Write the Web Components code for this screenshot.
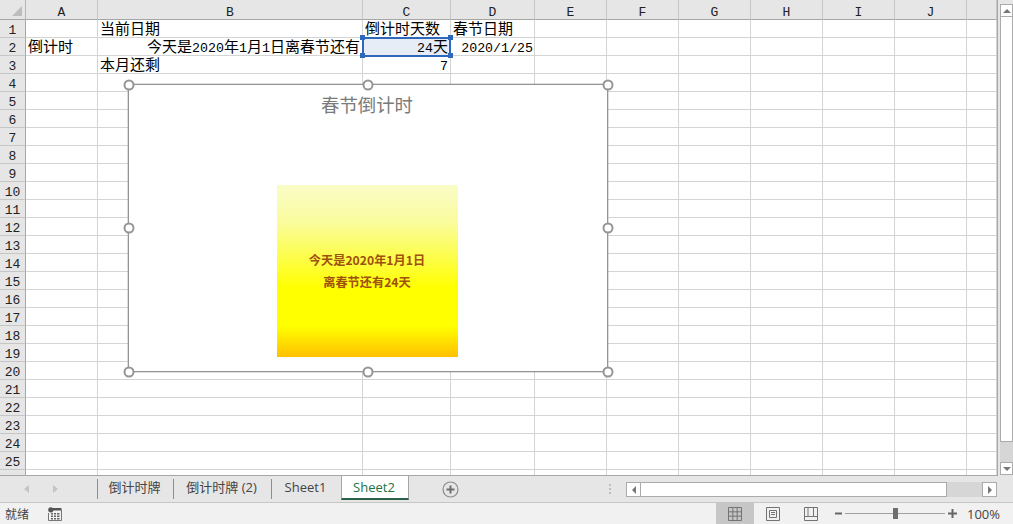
<!DOCTYPE html>
<html>
<head>
<meta charset="utf-8">
<style>
  html, body { margin: 0; padding: 0; background: #e6e6e6; overflow: hidden; }
</style>
</head>
<body>
<excel-app></excel-app>
<script>
const SONG = '"Liberation Mono", "Noto Sans CJK SC", monospace';
const UI = '"Noto Sans CJK SC", sans-serif';
const UI_LATIN = '"Open Sans", "Noto Sans CJK SC", sans-serif';

// latin runs are smaller than the cjk ones, SimSun style
const lat = s => `<span class="n">${s}</span>`;

class ExcelApp extends HTMLElement {
  constructor() {
    super();
    this.shadow = this.attachShadow({ mode: 'open' });
  }
  connectedCallback() {
    this.shadow.innerHTML = /*html*/`
    <style>
      :host { display: flex; flex-direction: column; width: 1013px; height: 524px; overflow: hidden; }
      .top { display: flex; height: 476px; }
    </style>
    <div class="top">
      <sheet-grid></sheet-grid>
      <v-scroll></v-scroll>
    </div>
    <sheet-tabs></sheet-tabs>
    <status-bar></status-bar>`;
  }
}

class SheetGrid extends HTMLElement {
  constructor() {
    super();
    this.shadow = this.attachShadow({ mode: 'open' });
  }
  connectedCallback() {
    const cols = ['A', 'B', 'C', 'D', 'E', 'F', 'G', 'H', 'I', 'J', ''];
    const cells = {
      'A2': `倒计时`,
      'B1': `当前日期`,
      'B2': `今天是${lat('2020')}年${lat('1')}月${lat('1')}日离春节还有`,
      'B3': `本月还剩`,
      'C1': `倒计时天数`,
      'C2': `${lat('24')}天`,
      'C3': lat('7'),
      'D1': `春节日期`,
      'D2': lat('2020/1/25')
    };
    const right = ['B2', 'C2', 'C3', 'D2'];
    let html = `<div class="corner"><i></i></div>`;
    cols.forEach(c => html += `<div class="col-head">${c}</div>`);
    for (let r = 1; r <= 26; r++) {
      html += `<div class="row-head">${r <= 25 ? r : ''}</div>`;
      cols.forEach(c => {
        const key = c + r;
        let cls = right.includes(key) ? 'cell right' : 'cell';
        if (key === 'C2') cls += ' active';
        if (key === 'D2') cls += ' date';
        html += `<div class="${cls}">${cells[key] || ''}</div>`;
      });
    }
    this.shadow.innerHTML = /*html*/`
    <style>
      :host { display: block; position: relative; width: 998px; height: 476px; background: #fff; overflow: hidden;
        box-sizing: border-box; border-right: 1px solid #a6a6a6; border-bottom: 1px solid #a6a6a6;
        font: 15px/17px ${SONG}; color: #000; }
      .grid { display: grid; grid-template-columns: 26px 72px 265px 88px 84px repeat(6, 72px) 30px;
        grid-template-rows: 20px repeat(26, 18px); }
      .corner, .col-head, .row-head { box-sizing: border-box; background: #e6e6e6; font-size: 13px; color: #222;
        display: flex; align-items: center; justify-content: center; }
      .corner { position: relative; border-right: 1px solid #b5b5b5; border-bottom: 1px solid #a6a6a6; }
      .corner i { position: absolute; right: 3px; bottom: 3px; width: 0; height: 0;
        border-left: 10px solid transparent; border-bottom: 10px solid #bdbdbd; }
      .col-head { border-right: 1px solid #c6c6c6; border-bottom: 1px solid #a6a6a6; padding-top: 6px; }
      .row-head { border-right: 1px solid #a6a6a6; border-bottom: 1px solid #c6c6c6; padding-top: 3px; }
      .cell { box-sizing: border-box; border-right: 1px solid #d4d4d4; border-bottom: 1px solid #d4d4d4;
        padding: 2px 2px 0 2px; white-space: nowrap; overflow: visible; min-width: 0; }
      .right { text-align: right; }
      .cell.date { padding-right: 1px; }
      .cell.active { background: #e6edf6; }
      .n { font-size: 13.3px; }
      .sel { position: absolute; left: 362px; top: 37px; width: 89px; height: 20px; box-sizing: border-box;
        border: 2px solid #2f67bd; }
      .sel b { position: absolute; width: 5px; height: 5px; background: #2f67bd; }
      .sel b:nth-child(1) { left: -4px; top: -4px; }
      .sel b:nth-child(2) { right: -4px; top: -4px; }
      .sel b:nth-child(3) { left: -4px; bottom: -3px; }
      .sel b:nth-child(4) { right: -4px; bottom: -3px; }
      countdown-chart { position: absolute; left: 128px; top: 84px; }
    </style>
    <div class="grid">${html}</div>
    <div class="sel"><b></b><b></b><b></b><b></b></div>
    <countdown-chart></countdown-chart>`;
  }
}

class CountdownChart extends HTMLElement {
  constructor() {
    super();
    this.shadow = this.attachShadow({ mode: 'open' });
  }
  connectedCallback() {
    const handles = [[0, 0], [50, 0], [100, 0], [0, 50], [100, 50], [0, 100], [50, 100], [100, 100]];
    this.shadow.innerHTML = /*html*/`
    <style>
      :host { display: block; width: 480px; height: 288px; box-sizing: border-box; position: relative;
        background: #fff; border: 1px solid #959595; box-shadow: 0 0 0 1px rgba(160, 160, 160, .35); font-family: ${UI}; }
      .inner { display: flex; flex-direction: column; align-items: center; height: 100%; padding-right: 2px; box-sizing: border-box; }
      h2 { margin: 6px 0 0; font-size: 18.4px; line-height: 26px; font-weight: 400; color: #7a7a7a; }
      .card { margin-top: 68px; width: 181px; height: 172px; display: flex; flex-direction: column;
        align-items: center; justify-content: center; gap: 4px; box-sizing: border-box;
        background: linear-gradient(#fafcc8 0%, #fafc9c 22%, #ffff00 60%, #ffff00 82%, #ffc000 100%);
        color: #a0500f; font-weight: 700; font-size: 12.2px; line-height: 18px; }
      .handles { position: absolute; left: -.5px; top: -.5px; width: 479px; height: 287px; }
      .h { position: absolute; width: 11px; height: 11px; box-sizing: border-box; border-radius: 50%;
        background: #fff; border: 2px solid #959595; transform: translate(-50%, -50%); }
    </style>
    <div class="inner">
      <h2>春节倒计时</h2>
      <div class="card">
        <div>今天是2020年1月1日</div>
        <div>离春节还有24天</div>
      </div>
    </div>
    <div class="handles">
      ${handles.map(h => `<span class="h" style="left:${h[0]}%;top:${h[1]}%"></span>`).join('')}
    </div>`;
  }
}

class VScroll extends HTMLElement {
  constructor() {
    super();
    this.shadow = this.attachShadow({ mode: 'open' });
  }
  connectedCallback() {
    this.shadow.innerHTML = /*html*/`
    <style>
      :host { display: flex; flex-direction: column; width: 13px; margin-left: 2px; background: #e6e6e6; height: 475px; }
      .btn { flex: none; height: 13px; background: #fff; border: 1px solid #ababab; box-sizing: border-box;
        display: flex; align-items: center; justify-content: center; }
      .up { margin-top: 4px; }
      .thumb { flex: none; height: 426px; background: #fff; border: 1px solid #ababab; box-sizing: border-box; margin-top: -1px; }
      .grow { flex: 1; background: #d6d6d6; }
      .tri-up { width: 0; height: 0; border: 4px solid transparent; border-top: 0; border-bottom: 4px solid #777; }
      .tri-down { width: 0; height: 0; border: 4px solid transparent; border-bottom: 0; border-top: 4px solid #777; }
    </style>
    <div class="btn up"><i class="tri-up"></i></div>
    <div class="thumb"></div>
    <div class="grow"></div>
    <div class="btn"><i class="tri-down"></i></div>`;
  }
}

class SheetTabs extends HTMLElement {
  constructor() {
    super();
    this.shadow = this.attachShadow({ mode: 'open' });
  }
  connectedCallback() {
    this.shadow.innerHTML = /*html*/`
    <style>
      :host { display: flex; align-items: stretch; height: 27px; box-sizing: border-box; background: #e6e6e6;
        border-bottom: 1px solid #c6c6c6; font: 13px/20px ${UI_LATIN}; color: #444; }
      .nav { display: flex; align-items: center; width: 97px; padding-left: 24px; gap: 24px; box-sizing: border-box; }
      .nav i { width: 0; height: 0; border: 4px solid transparent; }
      .nav i.l { border-left: 0; border-right: 5px solid #c4c4c4; }
      .nav i.r { border-right: 0; border-left: 5px solid #c4c4c4; }
      .tab { display: flex; align-items: center; justify-content: center; box-sizing: border-box; }
      .tab.sep { border-left: 1px solid #8c8c8c; margin: 3px 0 3px; padding: 0 2px 4px 0; }
      .t1 { width: 76px; } .t2 { width: 98px; } .t3 { width: 70px; }
      .active { width: 68px; background: #fff; color: #217346; margin-top: -1px; box-sizing: border-box; padding-right: 2px;
        border-left: 1px solid #a6a6a6; border-right: 1px solid #a6a6a6; border-bottom: 2px solid #2b6149; height: 25px; }
      .add { margin-left: 33px; align-self: center; width: 17px; height: 17px; display: block; }
      .dots { position: absolute; left: 609px; top: 484px; width: 2px; height: 10px; }
      .dots { background: repeating-linear-gradient(#bdbdbd 0 2px, transparent 2px 4px); }
      .hs { position: absolute; left: 626px; top: 482px; display: flex; width: 371px; height: 15px; background: #d6d6d6; }
      .b { width: 15px; height: 15px; flex: none; box-sizing: border-box; background: #fff; border: 1px solid #ababab;
        display: flex; align-items: center; justify-content: center; }
      .th { width: 307px; flex: none; background: #fff; border: 1px solid #ababab; box-sizing: border-box; margin-left: -1px; }
      .gap { flex: 1; }
      .b i { width: 0; height: 0; border: 4px solid transparent; }
      .b i.l { border-left: 0; border-right: 4px solid #777; }
      .b i.r { border-right: 0; border-left: 4px solid #777; }
    </style>
    <div class="nav"><i class="l"></i><i class="r"></i></div>
    <div class="tab sep t1">倒计时牌</div>
    <div class="tab sep t2">倒计时牌 (2)</div>
    <div class="tab sep t3">Sheet1</div>
    <div class="tab active">Sheet2</div>
    <svg class="add" viewBox="0 0 17 17">
      <circle cx="8.5" cy="8.5" r="7.5" fill="none" stroke="#8c8c8c" stroke-width="1.2"/>
      <path d="M8.5 4.5v8M4.5 8.5h8" stroke="#6e6e6e" stroke-width="2" fill="none"/>
    </svg>
    <div class="dots"></div>
    <div class="hs">
      <div class="b"><i class="l"></i></div>
      <div class="th"></div>
      <div class="gap"></div>
      <div class="b"><i class="r"></i></div>
    </div>`;
  }
}

class StatusBar extends HTMLElement {
  constructor() {
    super();
    this.shadow = this.attachShadow({ mode: 'open' });
  }
  connectedCallback() {
    this.shadow.innerHTML = /*html*/`
    <style>
      :host { display: flex; align-items: center; height: 21px; background: #f1f1f1; font: 12px/16px ${UI}; color: #444; }
      .ready { margin-left: 5px; width: 43px; }
      .macro { width: 14px; height: 14px; display: block; }
      .views { display: flex; margin-left: 654px; height: 21px; }
      .view { width: 38px; height: 21px; display: flex; align-items: center; justify-content: center; }
      .view.on { background: #c6c6c6; }
      .zoom { display: flex; align-items: center; margin-left: 5px; }
      .slider { position: relative; width: 100px; height: 1px; background: #a0a0a0; margin: 0 3px 0 3px; }
      .slider i { position: absolute; left: 48px; top: -5px; width: 5px; height: 11px; background: #6e6e6e; }
      .sym { width: 7px; height: 9px; display: block; }
      .pct { margin-left: 10px; font: 13px/16px ${UI_LATIN}; color: #444; }
    </style>
    <div class="ready">就绪</div>
    <svg class="macro" viewBox="0 0 14 14">
      <circle cx="2.8" cy="2.8" r="2.6" fill="#555"/>
      <path d="M5 1h8.5v2.5H5z" fill="#555"/>
      <path d="M.5 6v7.5h13V3" fill="none" stroke="#777"/>
      <path d="M3 6h2v1.5H3zM6 6h2v1.5H6zM9 6h2.5v1.5H9zM3 8.5h2V10H3zM6 8.5h2V10H6zM9 8.5h2.5V10H9zM3 11h2v1.5H3zM6 11h2v1.5H6zM9 11h2.5v1.5H9z" fill="#666"/>
    </svg>
    <div class="views">
      <div class="view on">
        <svg width="14" height="14" viewBox="0 0 14 14"><path d="M.5.5h13v13H.5zM4.83.5v13M9.17.5v13M.5 4.83h13M.5 9.17h13" fill="none" stroke="#737373"/></svg>
      </div>
      <div class="view">
        <svg width="14" height="14" viewBox="0 0 14 14"><path d="M.5.5h13v13H.5zM3.5 3.5h7v7h-7zM5 5.5h4M5 7.5h4" fill="none" stroke="#737373"/></svg>
      </div>
      <div class="view">
        <svg width="14" height="14" viewBox="0 0 14 14"><path d="M.5.5h13v13H.5zM.5 9.5h3.5V.5M4 9.5h5.5V.5M9.5 9.5h4" fill="none" stroke="#737373"/></svg>
      </div>
    </div>
    <div class="zoom">
      <svg class="sym" viewBox="0 0 7 9"><path d="M0 3.5h7v2H0z" fill="#666"/></svg>
      <div class="slider"><i></i></div>
      <svg class="sym" style="width:9px" viewBox="0 0 9 9"><path d="M0 3.5h9v2H0zM3.5 0h2v9h-2z" fill="#666"/></svg>
      <div class="pct">100%</div>
    </div>`;
  }
}

customElements.define('excel-app', ExcelApp);
customElements.define('sheet-grid', SheetGrid);
customElements.define('countdown-chart', CountdownChart);
customElements.define('v-scroll', VScroll);
customElements.define('sheet-tabs', SheetTabs);
customElements.define('status-bar', StatusBar);
</script>
</body>
</html>
